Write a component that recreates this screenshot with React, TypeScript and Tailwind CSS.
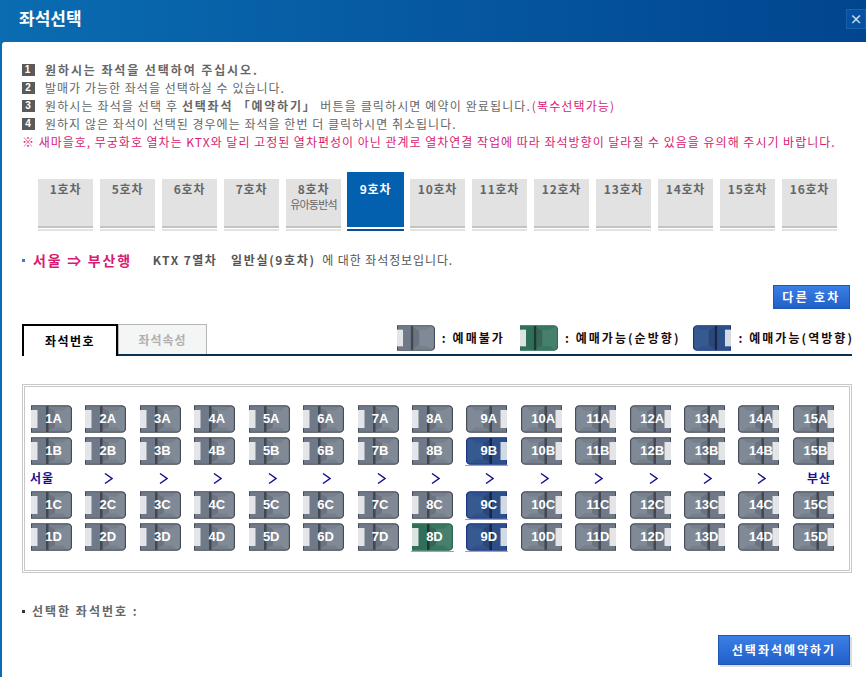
const KO = "font-['Noto_Sans_CJK_KR','Liberation_Sans',sans-serif]";

const cars = [
  { no: "1호차" }, { no: "5호차" }, { no: "6호차" }, { no: "7호차" },
  { no: "8호차", sub: "유아동반석" }, { no: "9호차", active: true },
  { no: "10호차" }, { no: "11호차" }, { no: "12호차" }, { no: "13호차" },
  { no: "14호차" }, { no: "15호차" }, { no: "16호차" },
];

const palette = {
  gray: { edge: "#474d56", a: "#6f7987", b: "#808a97", dark: "#414852", rest: "#e3e5e8" },
  green: { edge: "#2b6a55", a: "#2f6f5a", b: "#467f6b", dark: "#1c3a33", rest: "#dbe4df" },
  blue: { edge: "#1a3585", a: "#2c4f88", b: "#365990", dark: "#17264a", rest: "#d4dae4" },
};

// 좌석 그림: flip이면 등받이가 오른쪽
function SeatShape({ color, flip, w = 41, h = 28 }: { color: keyof typeof palette; flip?: boolean; w?: number; h?: number }) {
  const c = palette[color];
  return (
    <svg width={w} height={h} viewBox="0 0 41 28" className="block blur-[0.3px]">
      <g transform={flip ? "translate(41 0) scale(-1 1)" : undefined}>
        <path d="M0.5 0.8h36a4 4 0 0 1 4 4v18.4a4 4 0 0 1-4 4H0.5z" fill={c.b} stroke={c.edge} strokeWidth="1.3" />
        <rect x="1" y="1.5" width="15" height="25" fill={c.a} />
        <path d="M17 2l7 4v16l-7 4z" fill={c.dark} opacity="0.35" />
        <path d="M17 1.5h20l-5 4H24zM17 26.5h20l-5-4H24z" fill={c.a} opacity="0.6" />
        <rect x="15" y="1" width="2.5" height="26" fill={c.dark} />
        <rect x="0" y="5" width="6.5" height="18" fill={c.rest} />
      </g>
    </svg>
  );
}

function Seat({ label, color = "gray", flip, line }: { label: string; color?: keyof typeof palette; flip?: boolean; line?: boolean }) {
  return (
    <div className="relative h-[28px] w-[41px]">
      <SeatShape color={color} flip={flip} />
      <span className="absolute inset-0 flex items-center justify-center pl-[4px] font-['Liberation_Sans',sans-serif] text-[13px] font-bold text-white">
        {label}
      </span>
      {line && <div className="absolute -left-[1px] -right-[1px] top-[28px] h-[1px] bg-[#8fa3cf]" />}
    </div>
  );
}

function SeatRow({ row }: { row: string }) {
  const seats = Array.from({ length: 15 }, (_, i) => i + 1);
  return (
    <div className="grid grid-cols-[repeat(15,54.43px)]">
      {seats.map((n) => {
        const id = `${n}${row}`;
        const blue = id === "9B" || id === "9C" || id === "9D";
        const green = id === "8D";
        return <Seat key={id} label={id} flip={n >= 9} color={blue ? "blue" : green ? "green" : "gray"} line={blue || green} />;
      })}
    </div>
  );
}

function Num({ n }: { n: number }) {
  return (
    <span className="mr-[10px] inline-flex h-[12px] w-[13px] shrink-0 items-center justify-center bg-[#5a5a5a] font-['Liberation_Sans',sans-serif] text-[10px] font-bold text-white">
      {n}
    </span>
  );
}

function Arrow() {
  return (
    <svg width="9" height="11" viewBox="0 0 9 11" className="block">
      <path d="M1 0.5l7 5-7 5" fill="none" stroke="#1a1090" strokeWidth="1.4" />
    </svg>
  );
}

export default function App() {
  return (
    <div className={`${KO} flex h-[677px] w-[866px] flex-col overflow-hidden bg-[linear-gradient(90deg,#0a6cb1,#01458f)] text-[12px] leading-[18px] text-[#666]`}>
      <header className="flex h-[42px] shrink-0 items-start justify-between">
        <h1 className="ml-[19px] mt-[6px] text-[17px] font-bold leading-[24px] text-white">좌석선택</h1>
        <button className="mt-[9px] flex h-[20px] w-[20px] items-center justify-center border border-[#1a62a8] bg-[#0550a0] text-[13px] font-bold text-[#cfdcec]">
          ×
        </button>
      </header>

      <main className="ml-[2px] flex-1 rounded-tl-[3px] bg-white pl-[20px] pr-[14px] pt-[19px]">
        <ul className="tracking-[1.02px]">
          <li className="flex h-[18px] items-center font-bold tracking-[1.9px]"><Num n={1} />원하시는 좌석을 선택하여 주십시오.</li>
          <li className="flex h-[18px] items-center"><Num n={2} />발매가 가능한 좌석을 선택하실 수 있습니다.</li>
          <li className="flex h-[18px] items-center whitespace-pre tracking-[1.13px]">
            <Num n={3} />원하시는 좌석을 선택 후 <b className="tracking-[1.77px]">선택좌석 「예약하기」</b> 버튼을 클릭하시면 예약이 완료됩니다. <span className="-ml-[3px] text-[#d81b72]">(복수선택가능)</span>
          </li>
          <li className="flex h-[18px] items-center"><Num n={4} />원하지 않은 좌석이 선택된 경우에는 좌석을 한번 더 클릭하시면 취소됩니다.</li>
          <li className="h-[18px] whitespace-nowrap tracking-[0.99px] text-[#d81b72]">※ 새마을호, 무궁화호 열차는 KTX와 달리 고정된 열차편성이 아닌 관계로 열차연결 작업에 따라 좌석방향이 달라질 수 있음을 유의해 주시기 바랍니다.</li>
        </ul>

        <nav className="ml-[16px] mt-[21px] flex items-end gap-[7px]">
          {cars.map((car) =>
            car.active ? (
              <div key={car.no} className="mx-[-1px] w-[57px]">
                <div className="h-[55px] bg-[#0360ae] pt-[8px] text-center font-bold tracking-[0.8px] text-white">{car.no}</div>
                <div className="mt-[2px] h-[2px] bg-[#0a4f9a]" />
              </div>
            ) : (
              <div key={car.no} className="w-[55px]">
                <div className="h-[47px] bg-[#e2e2e2] pt-[1px] text-center">
                  <div className="font-bold tracking-[0.8px] text-[#666]">{car.no}</div>
                  <div className="mt-[-2px] whitespace-nowrap text-[11px] leading-[16px] tracking-[-0.8px]">{car.sub}</div>
                </div>
                <div className="h-[2px] bg-[#c4c4c4]" />
                <div className="mt-[1px] h-[2px] bg-[#e2e2e2]" />
              </div>
            ),
          )}
        </nav>

        <div className="mt-[20px] flex h-[18px] items-center whitespace-pre">
          <span className="mr-[8px] h-[3px] w-[3px] bg-[#4a78c0]" />
          <span className="text-[14px] font-bold tracking-[1.75px] text-[#d81b72]">서울 ⇒ 부산행</span>
          <span className="ml-[21px] font-bold tracking-[1.4px] text-[#555]">KTX 7열차</span>
          <span className="ml-[14px] font-bold tracking-[1.65px] text-[#555]">일반실(9호차)</span>
          <span className="ml-[3px] tracking-[0.9px] text-[#555]"> 에 대한 좌석정보입니다.</span>
        </div>

        <div className="mt-[16px] flex justify-end pr-[2px]">
          <button className="h-[24px] w-[77px] border border-[#1e57b0] bg-[linear-gradient(#3a7fe6,#2260c8)] font-bold tracking-[2.3px] text-white">
            다른 호차
          </button>
        </div>

        <section className="mt-[15px] flex h-[32px] items-end border-b-2 border-[#0b2f4f]">
          <div className="mb-[-2px] flex h-[32px] w-[96px] items-center justify-center border-x-2 border-t-2 border-black bg-white font-bold tracking-[1.5px] text-black">
            좌석번호
          </div>
          <div className="flex h-[30px] w-[89px] items-center justify-center border-x border-t border-[#b5b5b5] bg-[#f4f6f6] font-bold tracking-[1px] text-[#b0b0b0]">
            좌석속성
          </div>
          <div className="-mr-[2px] mb-[3px] ml-auto flex items-center font-bold tracking-[2.05px] text-[#1a0a0a]">
            <SeatShape color="gray" w={38} h={26} />
            <span className="ml-[7px] mr-[15px]">: 예매불가</span>
            <SeatShape color="green" w={38} h={26} />
            <span className="ml-[7px] mr-[13px]">: 예매가능(순방향)</span>
            <SeatShape color="blue" flip w={38} h={26} />
            <span className="ml-[7px]">: 예매가능(역방향)</span>
          </div>
        </section>

        <section className="mt-[28px] h-[189px] border-[3px] border-double border-[#c8c8c8] pl-[6px] pt-[18px]">
          <div className="flex flex-col gap-[4px]">
            <SeatRow row="A" />
            <SeatRow row="B" />
          </div>
          <div className="grid h-[26px] grid-cols-[repeat(15,54.43px)] items-center">
            <span className="-ml-[1px] font-bold tracking-[1px] text-[#1a1090]">서울</span>
            {Array.from({ length: 13 }, (_, i) => (
              <div key={i} className="pl-[19px]"><Arrow /></div>
            ))}
            <span className="whitespace-nowrap pl-[14px] font-bold tracking-[1px] text-[#1a1090]">부산</span>
          </div>
          <div className="flex flex-col gap-[4px]">
            <SeatRow row="C" />
            <SeatRow row="D" />
          </div>
        </section>

        <div className="mt-[29px] flex h-[18px] items-center font-bold tracking-[2px]">
          <span className="mr-[7px] h-[3px] w-[3px] bg-[#333]" />
          선택한 좌석번호 :
        </div>

        <div className="mt-[15px] flex justify-end pr-[2px]">
          <button className="h-[30px] w-[132px] border border-[#1e57b0] bg-[linear-gradient(#3a7fe6,#2260c8)] text-[12px] font-bold tracking-[2px] text-white shadow-[2px_2px_0_#ddd]">
            선택좌석예약하기
          </button>
        </div>
      </main>
    </div>
  );
}
